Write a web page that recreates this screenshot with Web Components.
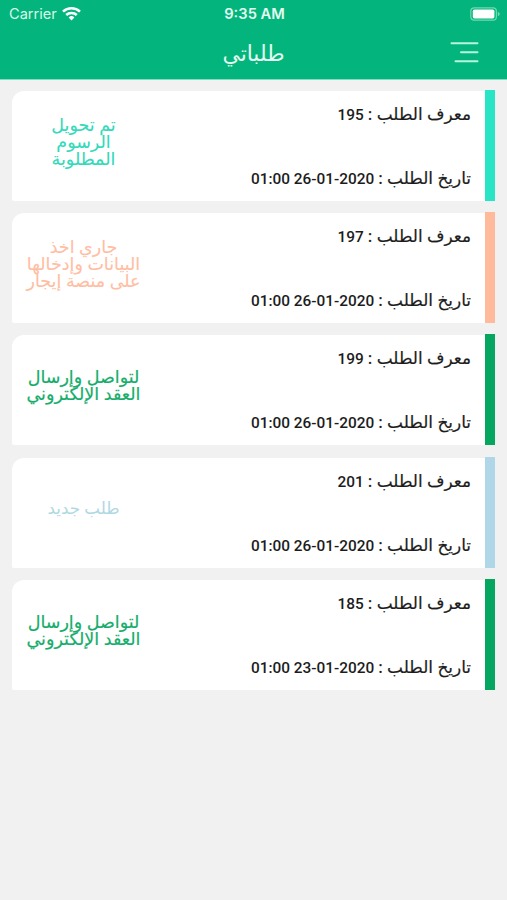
<!DOCTYPE html>
<html lang="ar" dir="rtl">
<head>
<meta charset="utf-8">
<title>طلباتي</title>
<style>
    body {
        margin: 0;
        min-height: 900px;
        background: #f1f1f1;
        font-family: "Noto Sans", "DejaVu Sans", sans-serif;
    }
</style>
</head>
<body>
<orders-app></orders-app>

<script>
class StatusBar extends HTMLElement {
    constructor() {
        super();
        this.attachShadow({ mode: 'open' });
    }

    connectedCallback() {
        this.shadowRoot.innerHTML = `
            <style>
                :host {
                    display: grid;
                    grid-template-columns: 1fr auto 1fr;
                    align-items: center;
                    height: 27px;
                    padding: 0 7px 0 9px;
                    color: #fff;
                    direction: ltr;
                    font: 14.6px/29px Inter, sans-serif;
                }
                .carrier { display: flex; align-items: center; gap: 5px; color: #d8f8e9; }
                .carrier svg { margin-top: -2px; }
                .time { font-size: 14.7px; font-weight: 600; color: #e4fbf1; }
                .battery { justify-self: end; margin-top: -1px; }
                svg { display: block; }
            </style>
            <div class="carrier">
                <span>${this.getAttribute('carrier')}</span>
                <svg width="19" height="15" viewBox="0 0 19 15" fill="none" stroke="#fff" stroke-width="2.5">
                    <path d="M1 5.6a12.3 12.3 0 0 1 17 0"/>
                    <path d="M4.2 9a7.8 7.8 0 0 1 10.6 0"/>
                    <path d="M9.5 14.4 6.6 11.5a4.2 4.2 0 0 1 5.8 0z" fill="#fff" stroke="none"/>
                </svg>
            </div>
            <div class="time">${this.getAttribute('time')}</div>
            <svg class="battery" width="30" height="14" viewBox="0 0 30 14">
                <rect x=".8" y=".8" width="25.6" height="12.4" rx="3.4" fill="none" stroke="#70d9ae" stroke-width="1.2"/>
                <rect x="2.8" y="2.6" width="21.6" height="8.8" rx="1.6" fill="#fff"/>
                <path d="M27.8 4.8q2 .7 2 2.2t-2 2.2z" fill="#70d9ae"/>
            </svg>
        `;
    }
}

class NavBar extends HTMLElement {
    constructor() {
        super();
        this.attachShadow({ mode: 'open' });
    }

    connectedCallback() {
        this.shadowRoot.innerHTML = `
            <style>
                :host {
                    display: grid;
                    grid-template-columns: 1fr auto 1fr;
                    align-items: center;
                    height: 52px;
                    padding: 0 28px;
                    color: #e4fbf1;
                }
                h1 { margin: 0; font-size: 21.8px; line-height: 50px; font-weight: 400; }
                svg { display: block; margin-top: -2px; }
            </style>
            <svg width="29" height="22" viewBox="0 0 29 22" stroke="#b9f5dc" stroke-width="2" stroke-linecap="round">
                <path d="M1.5 2.3H27.5M11 11.3H27.5M5.5 20.3H27.5"/>
            </svg>
            <h1><slot></slot></h1>
        `;
    }
}

class OrderCard extends HTMLElement {
    constructor() {
        super();
        this.attachShadow({ mode: 'open' });
    }

    connectedCallback() {
        this.shadowRoot.innerHTML = `
            <style>
                :host {
                    display: flex;
                    height: 111px;
                    color: #1c1c1c;
                }
                .bar { width: 10px; background: var(--status); }
                .body {
                    flex: 1;
                    display: flex;
                    justify-content: space-between;
                    margin-top: 1px;
                    background: #fff;
                    border-radius: 12px 0 0 2px;
                }
                .info {
                    display: flex;
                    flex-direction: column;
                    justify-content: space-between;
                    padding: 11px 14px 10px 0;
                    font-size: 15.2px;
                    line-height: 24px;
                    white-space: nowrap;
                }
                .label { font-size: 16.9px; -webkit-text-stroke: 0.2px; }
                .value { font-family: Roboto, sans-serif; font-size: 15.4px; font-weight: 500; }
                .status {
                    display: flex;
                    flex-direction: column;
                    justify-content: center;
                    width: 143px;
                    padding-bottom: 10px;
                    color: var(--status-text, var(--status));
                    font-size: var(--status-size, 17.5px);
                    line-height: 17px;
                    text-align: center;
                    white-space: pre-line;
                    -webkit-text-stroke: var(--status-stroke, 0.1px);
                }
            </style>
            <div class="bar"></div>
            <div class="body">
                <div class="info">
                    <div><span class="label">معرف الطلب :</span> <span class="value">${this.getAttribute('number')}</span></div>
                    <div><span class="label">تاريخ الطلب :</span> <span class="value">${this.getAttribute('date')}</span></div>
                </div>
                <div class="status"><slot></slot></div>
            </div>
        `;
    }
}

class OrdersApp extends HTMLElement {
    constructor() {
        super();
        this.attachShadow({ mode: 'open' });
    }

    connectedCallback() {
        this.shadowRoot.innerHTML = `
            <style>
                :host { display: block; }
                header { background: #03b57c; border-bottom: 1px solid #7edfbf; }
                main {
                    display: flex;
                    flex-direction: column;
                    gap: 11.2px;
                    padding: 10px 12px 0 12px;
                }
                .sent { --status: #27e5c5; --status-text: #32d9ba; }
                .progress { --status: #ffba9b; --status-text: #ffbea3; }
                .contract { --status: #05a660; --status-text: #16ad6b; --status-stroke: 0.2px; }
                .new { --status: #afd7e7; --status-text: #aed8e2; --status-size: 16.7px; --status-stroke: 0; }
            </style>
            <header>
                <status-bar carrier="Carrier" time="9:35 AM"></status-bar>
                <nav-bar>طلباتي</nav-bar>
            </header>
            <main>
                <order-card class="sent" number="195" date="2020-01-26 01:00">تم تحويل
                    الرسوم
                    المطلوبة</order-card>
                <order-card class="progress" number="197" date="2020-01-26 01:00">جاري اخذ
                    البيانات وإدخالها
                    على منصة إيجار</order-card>
                <order-card class="contract" number="199" date="2020-01-26 01:00">لتواصل وإرسال
                    العقد الإلكتروني</order-card>
                <order-card class="new" number="201" date="2020-01-26 01:00">طلب جديد</order-card>
                <order-card class="contract" number="185" date="2020-01-23 01:00">لتواصل وإرسال
                    العقد الإلكتروني</order-card>
            </main>
        `;
    }
}

customElements.define('status-bar', StatusBar);
customElements.define('nav-bar', NavBar);
customElements.define('order-card', OrderCard);
customElements.define('orders-app', OrdersApp);
</script>
</body>
</html>
